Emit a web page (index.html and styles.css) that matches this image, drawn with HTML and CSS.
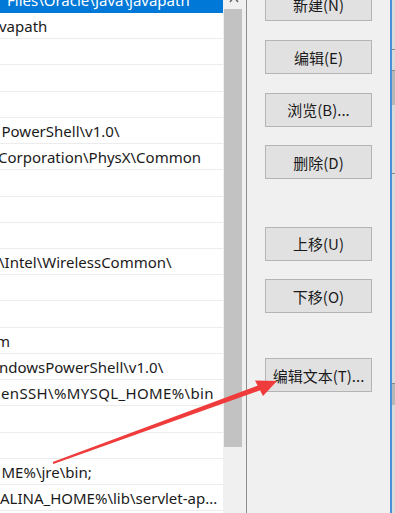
FILE: index.html
```html
<!DOCTYPE html>
<html>
<head>
  <meta charset="utf-8">
  <link rel="stylesheet" href="styles.css">
</head>
<body>
  <div class="dialog">
    <!-- path list, scrolled to the right -->
    <div class="listBox">
      <div class="rows">
        <div class="row selected"><span class="txt off7">Files\Oracle\Java\javapath</span></div>
        <div class="row"><span class="txt offm1">vapath</span></div>
        <div class="row"></div>
        <div class="row"></div>
        <div class="row"></div>
        <div class="row"><span class="txt off1">PowerShell\v1.0\</span></div>
        <div class="row"><span class="txt offm2">Corporation\PhysX\Common</span></div>
        <div class="row"></div>
        <div class="row"></div>
        <div class="row"></div>
        <div class="row"><span class="txt offm1">\Intel\WirelessCommon\</span></div>
        <div class="row"></div>
        <div class="row"></div>
        <div class="row"><span class="txt offm4">m</span></div>
        <div class="row"><span class="txt offm1">ndowsPowerShell\v1.0\</span></div>
        <div class="row"><span class="txt wide">enSSH\%MYSQL_HOME%\bin</span></div>
        <div class="row"></div>
        <div class="row"></div>
        <div class="row"><span class="txt off1">ME%\jre\bin;</span></div>
        <div class="row"><span class="txt">ALINA_HOME%\lib\servlet-ap...</span></div>
      </div>
      <div class="scrollbar">
        <svg class="upArrow" width="12" height="6" viewBox="0 0 12 6">
          <path d="M2 4 L6 -1 L10 4" fill="none" stroke="#606060" stroke-width="1.4"/>
        </svg>
        <div class="thumb"></div>
      </div>
    </div>

    <div class="buttons">
      <button class="btn first">新建(N)</button>
      <button class="btn">编辑(E)</button>
      <button class="btn">浏览(B)...</button>
      <button class="btn">删除(D)</button>
      <button class="btn spaced">上移(U)</button>
      <button class="btn">下移(O)</button>
      <button class="btn spaced2">编辑文本(T)...</button>
    </div>

    <div class="winEdge"></div>
    <div class="behind">
      <div class="band b1"></div>
      <div class="band b2"></div>
      <div class="band b3"></div>
      <div class="band b4"></div>
    </div>
  </div>

  <svg class="annot" width="395" height="513" viewBox="0 0 395 513">
    <polygon points="53.3,463.9 52.7,462.1 259.1,385 260.9,390" fill="#ef3b3b"/>
    <polygon points="277,381 255,380.5 263,396" fill="#ef3b3b"/>
  </svg>
</body>
</html>
```

FILE: styles.css
```css
html, body {
  margin: 0;
  padding: 0;
}
body {
  width: 395px;
  height: 513px;
  overflow: hidden;
  background: #f0f0f0;
  font-family: "Noto Sans", "Noto Sans CJK SC", sans-serif;
  position: relative;
}

.dialog {
  display: flex;
  height: 513px;
}

/* list */
.listBox {
  display: flex;
  width: 247px;
  border-right: 1px solid #8e8e8e;
  box-sizing: border-box;
  flex: none;
}
.rows {
  width: 223px;
  background: #fff;
  overflow: hidden;
}
.row {
  height: 26.22px;
  box-sizing: border-box;
  border-bottom: 1px solid #ececec;
  display: flex;
  align-items: center;
  white-space: nowrap;
  overflow: hidden;
  font-size: 15px;
  color: #1a1a1a;
}
.row:first-child {
  margin-top: -13.2px;
}
.row.selected {
  background: #0078d7;
  color: #fff;
  border-bottom-color: #0078d7;
}
.txt { display: block; padding-top: 1px; }
.off7 { margin-left: 7px; }
.off1 { margin-left: 1.5px; }
.offm1 { margin-left: -1px; }
.offm2 { margin-left: -2px; }
.offm4 { margin-left: -4px; }
.wide { margin-left: 1px; letter-spacing: 0.35px; }

.scrollbar {
  width: 23px;
  background: #f0f0f0;
  padding-left: 1px;
  box-sizing: border-box;
}
.upArrow {
  display: block;
  margin: -2px 0 0 4px;
}
.thumb {
  width: 18px;
  height: 438px;
  margin-top: 5px;
  background: #c2c2c2;
}

/* buttons */
.buttons {
  width: 143px;
  flex: none;
  display: flex;
  flex-direction: column;
  align-items: center;
  gap: 18.7px;
}
.btn {
  width: 107px;
  height: 34px;
  flex: none;
  background: #e1e1e1;
  border: 1.5px solid #b4b4b4;
  color: #1a1a1a;
  font-family: "Noto Sans CJK SC", sans-serif;
  font-size: 15px;
  padding: 0;
  line-height: 1;
}
.btn.first { margin-top: -12.7px; }
.btn.spaced { margin-top: 28.6px; }
.btn.spaced2 { margin-top: 26.3px; }

/* window edge + what lies behind */
.winEdge {
  width: 2px;
  background: #4b8fd6;
  flex: none;
}
.behind {
  flex: 1;
  background: #dadada;
  display: flex;
  flex-direction: column;
}
.band { height: 1px; background: #8a8a8a; }
.b1 { margin-top: 49px; }
.b2 { margin-top: 20px; height: 34px; background: #b8b8b8; border-top: 1px solid #8a8a8a; }
.b3 { margin-top: 68px; }
.b4 { margin-top: 209px; height: 21px; background: #b8b8b8; border-top: 1px solid #8a8a8a; }

.annot {
  position: absolute;
  left: 0;
  top: 0;
  pointer-events: none;
}
```
